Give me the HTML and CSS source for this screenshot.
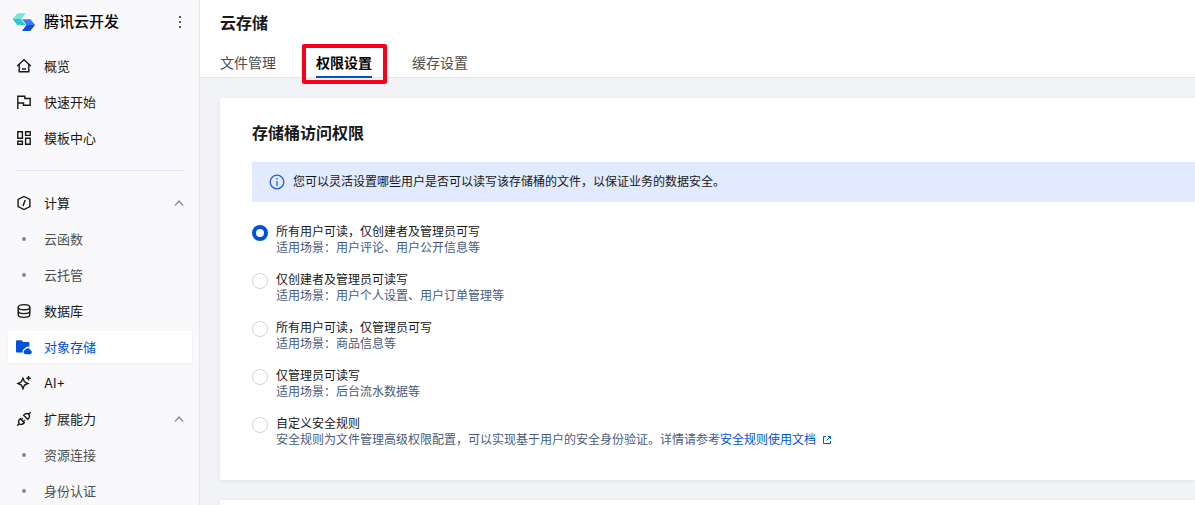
FILE: index.html
```html
<!DOCTYPE html>
<html lang="zh-CN">
<head>
    <meta charset="UTF-8">
    <meta name="viewport" content="width=device-width, initial-scale=1.0">
    <title>云存储 - 腾讯云开发</title>
    <link rel="stylesheet" href="styles.css">
</head>
<body>
    <div class="app">
        <aside class="sidebar">
            <div class="brand">
                <svg class="brand-logo" viewBox="0 0 24 24" aria-hidden="true">
                    <path fill="#74e6e2" d="M5.5 3.2h8.3L9.3 9H.6z"/>
                    <path fill="#2dcbd0" d="M.6 9h8.7l4.2 6H5.2z"/>
                    <path fill="#3d78fa" d="M10.2 9.2h8.3l4.6 5.8h-8.6z"/>
                    <path fill="#0b50d8" d="M23.1 15l-4.9 6H9.9l4.6-6z"/>
                </svg>
                <span class="brand-name">腾讯云开发</span>
                <button class="brand-more" type="button" aria-label="更多">
                    <svg viewBox="0 0 16 16"><path d="M7 2h2v2H7zM7 7h2v2H7zM7 12h2v2H7z"/></svg>
                </button>
            </div>

            <nav class="nav">
                <a class="nav-item" href="#">
                    <svg class="icon" viewBox="0 0 16 16"><path d="M1.2 8L8 1.8 14.8 8M3.2 6.5v7.3h9.6V6.5M6 11h4"/></svg>
                    <span>概览</span>
                </a>
                <a class="nav-item" href="#">
                    <svg class="icon" viewBox="0 0 16 16"><path d="M1.8 15V2.2h7v2.3h5.4v6.7H7.5V9H1.8"/></svg>
                    <span>快速开始</span>
                </a>
                <a class="nav-item" href="#">
                    <svg class="icon" viewBox="0 0 16 16"><path d="M1.8 1.8h4.6v6.4H1.8zM9.6 1.8h4.6v3.6H9.6zM1.8 11.2h4.6v3H1.8zM9.6 8.2h4.6v6H9.6z"/></svg>
                    <span>模板中心</span>
                </a>

                <hr class="nav-divider">

                <button class="nav-item" type="button" aria-expanded="true">
                    <svg class="icon" viewBox="0 0 16 16"><path d="M8 1.5l5.9 3v7L8 14.5l-5.9-3v-7zM9.2 5L7 11"/></svg>
                    <span>计算</span>
                    <svg class="nav-arrow" viewBox="0 0 10 10"><path d="M1 7.5L5 3l4 4.5"/></svg>
                </button>
                <a class="nav-item nav-sub" href="#"><i class="dot"></i><span>云函数</span></a>
                <a class="nav-item nav-sub" href="#"><i class="dot"></i><span>云托管</span></a>
                <a class="nav-item" href="#">
                    <svg class="icon" viewBox="0 0 16 16"><ellipse cx="8" cy="4.2" rx="5.8" ry="2.6"/><path d="M2.2 4.2v7.6c0 1.5 2.6 2.6 5.8 2.6s5.8-1.1 5.8-2.6V4.2M2.2 8c0 1.5 2.6 2.6 5.8 2.6s5.8-1.1 5.8-2.6"/></svg>
                    <span>数据库</span>
                </a>
                <a class="nav-item active" href="#" aria-current="page">
                    <svg class="icon icon-fill" viewBox="0 0 16 16"><path d="M0 2.2Q0 1.2 1 1.2h4.6l1.6 1.9H12.6q.8 0 .8.8v3.8a4.2 4.2 0 0 0-4.7 1.8 3.5 3.5 0 0 0-2 4H1q-1 0-1-1zM9.8 15.2a2.3 2.3 0 0 1-.6-4.5 2.9 2.9 0 0 1 5.3.5 2.1 2.1 0 0 1-.3 4z"/></svg>
                    <span>对象存储</span>
                </a>
                <a class="nav-item" href="#">
                    <svg class="icon" viewBox="0 0 16 16"><path d="M7 3.2l1.5 3.6L12 8.5l-3.5 1.6L7 13.8l-1.6-3.7L1.9 8.5l3.5-1.7zM12.5 1v4.4M10.3 3.2h4.4"/></svg>
                    <span>AI+</span>
                </a>
                <button class="nav-item" type="button" aria-expanded="true">
                    <svg class="icon" viewBox="0 0 16 16"><path d="M1.3 14.7l2-2M12.7 3.3l2-2M3.3 12.7c-1.5-1.8-.7-3.5.9-5l4.1 4.1c-1.6 1.6-3.2 2.4-5 .9zM12.7 3.3c1.5 1.8.7 3.5-.9 5L7.7 4.2c1.6-1.6 3.2-2.4 5-.9zM5.3 8.8l1.5-1.5M7.2 10.7l1.5-1.5"/></svg>
                    <span>扩展能力</span>
                    <svg class="nav-arrow" viewBox="0 0 10 10"><path d="M1 7.5L5 3l4 4.5"/></svg>
                </button>
                <a class="nav-item nav-sub" href="#"><i class="dot"></i><span>资源连接</span></a>
                <a class="nav-item nav-sub" href="#"><i class="dot"></i><span>身份认证</span></a>
            </nav>
        </aside>

        <main class="main">
            <header class="page-header">
                <h1>云存储</h1>
                <div class="tabs" role="tablist">
                    <button class="tab" type="button" role="tab">文件管理</button>
                    <button class="tab tab-active" type="button" role="tab" aria-selected="true">权限设置</button>
                    <button class="tab" type="button" role="tab">缓存设置</button>
                </div>
            </header>

            <div class="content">
                <section class="card">
                    <h2>存储桶访问权限</h2>
                    <div class="alert">
                        <svg class="alert-icon" viewBox="0 0 16 16"><circle cx="8" cy="8" r="6.8"/><path d="M8 7v5M8 4v1.6"/></svg>
                        <span>您可以灵活设置哪些用户是否可以读写该存储桶的文件，以保证业务的数据安全。</span>
                    </div>
                    <div class="options">
                        <div class="option">
                            <input type="radio" name="acl" id="acl-read" checked>
                            <div>
                                <label for="acl-read">所有用户可读，仅创建者及管理员可写</label>
                                <p>适用场景：用户评论、用户公开信息等</p>
                            </div>
                        </div>
                        <div class="option">
                            <input type="radio" name="acl" id="acl-private">
                            <div>
                                <label for="acl-private">仅创建者及管理员可读写</label>
                                <p>适用场景：用户个人设置、用户订单管理等</p>
                            </div>
                        </div>
                        <div class="option">
                            <input type="radio" name="acl" id="acl-admin-write">
                            <div>
                                <label for="acl-admin-write">所有用户可读，仅管理员可写</label>
                                <p>适用场景：商品信息等</p>
                            </div>
                        </div>
                        <div class="option">
                            <input type="radio" name="acl" id="acl-admin">
                            <div>
                                <label for="acl-admin">仅管理员可读写</label>
                                <p>适用场景：后台流水数据等</p>
                            </div>
                        </div>
                        <div class="option">
                            <input type="radio" name="acl" id="acl-custom">
                            <div>
                                <label for="acl-custom">自定义安全规则</label>
                                <p>安全规则为文件管理高级权限配置，可以实现基于用户的安全身份验证。详情请参考<a href="#">安全规则使用文档<svg class="link-icon" viewBox="0 0 10 10"><path d="M4 1.5H1.5v7h7V6M6 1.5h2.5V4M8.5 1.5L4.5 5.5"/></svg></a></p>
                            </div>
                        </div>
                    </div>
                </section>
                <section class="card"></section>
            </div>
        </main>
    </div>
</body>
</html>
```
FILE: styles.css
```css
* {
    margin: 0;
    padding: 0;
    box-sizing: border-box;
}

body {
    font-family: Inter, "Noto Sans CJK SC", sans-serif;
    font-size: 12px;
    line-height: 16px;
    color: #181818;
    background: #f2f3f7;
}

button {
    border: none;
    background: none;
    font: inherit;
    color: inherit;
    cursor: pointer;
}

a {
    color: #0052d9;
    text-decoration: none;
}

.app {
    display: flex;
    height: 100vh;
    overflow: hidden;
}

/* Sidebar */
.sidebar {
    flex: 0 0 200px;
    background: #f9f9fc;
    border-right: 1px solid #e6e7ec;
}

.brand {
    display: flex;
    align-items: center;
    height: 44px;
    padding: 0 11px 0 12px;
}

.brand-logo {
    width: 24px;
    height: 24px;
    margin-right: 8px;
}

.brand-name {
    font-size: 15px;
    font-weight: 500;
    line-height: 24px;
    color: #000;
}

.brand-more {
    width: 16px;
    height: 16px;
    margin-left: auto;
}

.brand-more svg {
    display: block;
    fill: #555;
}

.nav {
    display: flex;
    flex-direction: column;
    gap: 4px;
    padding: 6px 7px 0 8px;
}

.nav-item {
    display: flex;
    align-items: center;
    gap: 12px;
    height: 32px;
    padding: 0 8px;
    font-size: 13px;
    line-height: 20px;
    color: #181818;
}

.nav-sub {
    color: #4d4d4d;
}

.nav-item.active {
    color: #0052d9;
    background: #fff;
    box-shadow: 0 1px 3px rgba(0, 0, 0, 0.06);
}

.icon {
    width: 16px;
    height: 16px;
    fill: none;
    stroke: currentColor;
    stroke-width: 1.4;
}

.icon-fill {
    fill: currentColor;
    stroke: none;
}

.dot {
    width: 4px;
    height: 4px;
    margin: 0 6px;
    border-radius: 50%;
    background: #888;
}

.nav-arrow {
    width: 10px;
    height: 10px;
    margin-left: auto;
    fill: none;
    stroke: #888;
    stroke-width: 1.2;
}

.nav-divider {
    height: 1px;
    margin: 12px 8px;
    border: none;
    background: #e8e8eb;
}

/* Main */
.main {
    flex: 1;
    min-width: 0;
}

.page-header {
    height: 78px;
    padding: 12px 20px 0;
    background: #fff;
    border-bottom: 1px solid #e4e5ea;
}

h1,
h2 {
    font-size: 16px;
    font-weight: 700;
    line-height: 22px;
}

.tabs {
    display: flex;
    gap: 40px;
    margin-top: 14px;
}

.tab {
    position: relative;
    height: 30px;
    font-size: 14px;
    line-height: 30px;
    color: #4d4d4d;
}

.tab-active {
    font-weight: 700;
    color: #000;
    border-bottom: 2px solid #0052d9;
}

/* Highlight frame round the current tab */
.tab-active::after {
    content: "";
    position: absolute;
    inset: -4px -15px -8px -14px;
    border: 4px solid #f5001d;
    border-radius: 2px;
}

.content {
    display: flex;
    flex-direction: column;
    gap: 20px;
    padding: 20px 0 0 20px;
}

.card {
    padding: 24px 0 32px 32px;
    background: #fff;
    box-shadow: 0 1px 4px rgba(30, 40, 80, 0.08);
}

.alert {
    display: flex;
    align-items: center;
    gap: 8px;
    height: 40px;
    margin-top: 18px;
    padding: 0 17px;
    background: #e1eafe;
}

.alert-icon {
    width: 16px;
    height: 16px;
    fill: none;
    stroke: #2a5bd7;
    stroke-width: 1.3;
}

.options {
    display: flex;
    flex-direction: column;
    gap: 16px;
    margin-top: 22px;
}

.option {
    display: flex;
    gap: 8px;
}

.option input {
    appearance: none;
    flex: none;
    width: 16px;
    height: 16px;
    margin-top: 1px;
    border: 1px solid #cfd5de;
    border-radius: 50%;
    background: #fff;
}

.option input:checked {
    border: 4px solid #0052d9;
}

.option label {
    display: block;
}

.option p {
    color: #495b7c;
}

.link-icon {
    width: 10px;
    height: 10px;
    margin-left: 6px;
    vertical-align: -1px;
    fill: none;
    stroke: currentColor;
}
```
